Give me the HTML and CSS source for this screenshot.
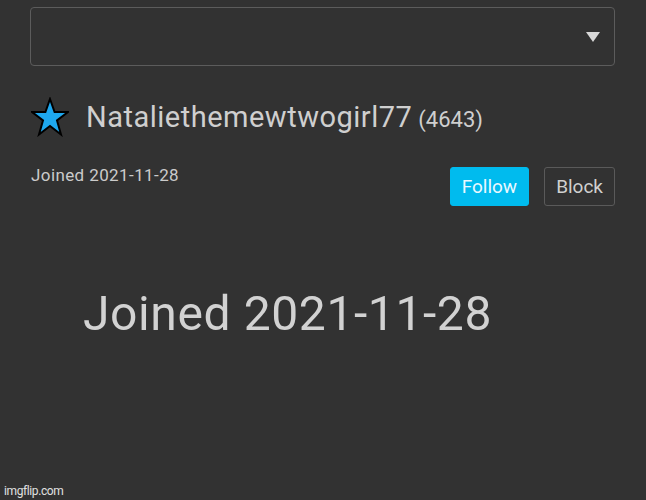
FILE: index.html
```html
<!DOCTYPE html>
<html>
<head>
<meta charset="utf-8">
<link rel="stylesheet" href="styles.css">
</head>
<body>
<div class="page">
  <div class="select">
    <span class="caret"></span>
  </div>
  <div class="user">
    <svg class="star" width="38" height="40" viewBox="0 0 38 40">
      <polygon points="19,2 23.6,15 37,15 26,23.5 30,37.5 19,29 8,37.5 12,23.5 1,15 14.4,15" fill="#1ea8ef" stroke="#000" stroke-width="2" stroke-linejoin="miter"/>
    </svg>
    <span class="name">Nataliethemewtwogirl77</span>
    <span class="points">(4643)</span>
  </div>
  <div class="meta">
    <span class="joined">Joined 2021-11-28</span>
    <div class="actions">
      <button class="btn follow">Follow</button>
      <button class="btn block">Block</button>
    </div>
  </div>
  <div class="big">Joined 2021-11-28</div>
</div>
<div class="watermark">imgflip.com</div>
</body>
</html>
```
FILE: styles.css
```css
html, body {
  margin: 0;
  padding: 0;
  background: #323232;
  height: 100%;
}
body {
  font-family: Roboto, "Liberation Sans", sans-serif;
  color: #cdcdcd;
  position: relative;
  overflow: hidden;
}
.page {
  padding: 7px 31px 0 30px;
}
.select {
  height: 57px;
  border: 1px solid #5c5c5c;
  border-radius: 4px;
  display: flex;
  align-items: center;
  justify-content: flex-end;
  padding-right: 14px;
}
.caret {
  width: 0;
  height: 0;
  border-left: 7px solid transparent;
  border-right: 7px solid transparent;
  border-top: 10px solid #d8d8d8;
}
.user {
  display: flex;
  align-items: center;
  margin-top: 30px;
  height: 42px;
}
.star {
  margin-left: 1px;
  margin-right: 17px;
}
.name {
  font-size: 29px;
  letter-spacing: 0.5px;
  color: #cfcfcf;
}
.points {
  font-size: 22px;
  margin-left: 6px;
  margin-top: 4px;
  color: #cfcfcf;
}
.meta {
  display: flex;
  justify-content: space-between;
  align-items: flex-start;
  margin-top: 27px;
}
.joined {
  font-size: 17px;
  letter-spacing: 0.4px;
  margin-top: 0;
  margin-left: 1px;
  color: #cbcbcb;
}
.actions {
  display: flex;
  gap: 15px;
  margin-top: 2px;
}
.btn {
  font-family: Roboto, "Liberation Sans", sans-serif;
  font-size: 19px;
  height: 39px;
  border-radius: 3px;
  padding: 0 11px;
}
.follow {
  background: #00bbee;
  border: 1px solid #00bbee;
  color: #eaf8ff;
}
.block {
  background: transparent;
  border: 1px solid #5a5a5a;
  color: #d0d0d0;
}
.big {
  font-size: 48px;
  letter-spacing: 0.6px;
  margin-top: 79px;
  margin-left: 53px;
  color: #d2d2d2;
  filter: blur(0.6px);
}
.watermark {
  position: absolute;
  left: 4px;
  bottom: 2px;
  font-size: 12px;
  color: #e0e0e0;
  letter-spacing: -0.4px;
}
```
